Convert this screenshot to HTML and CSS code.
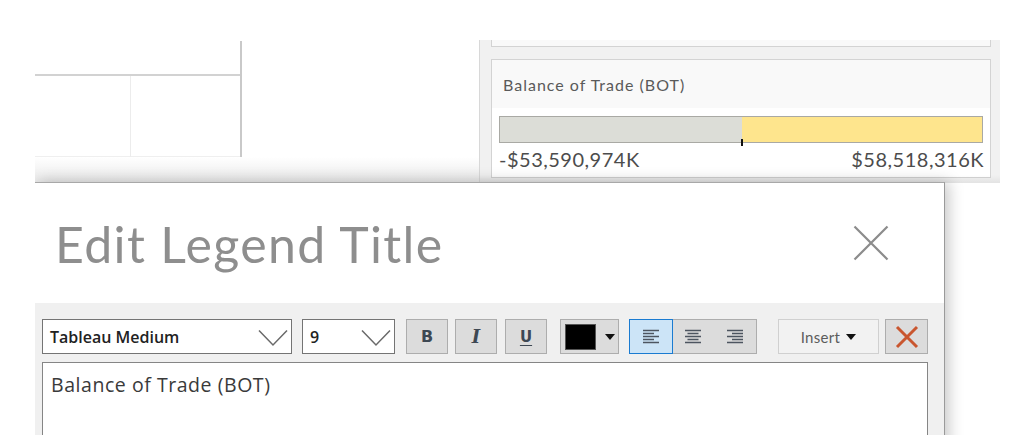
FILE: index.html
```html
<!DOCTYPE html>
<html lang="en">
<head>
<meta charset="utf-8">
<title>Edit Legend Title</title>
<link rel="stylesheet" href="styles.css">
</head>
<body>
<div class="app">
  <div class="sheet">
    <div class="table">
      <div class="table-head"></div>
      <div class="table-body">
        <div class="col col-a"><div class="cell"></div><div class="cell-foot"></div></div>
        <div class="col col-b"><div class="cell"></div><div class="cell-foot"></div></div>
      </div>
    </div>
  </div>
  <div class="panel">
    <div class="card card-top"></div>
    <div class="card legend">
      <div class="legend-title">Balance of Trade (BOT)</div>
      <div class="legend-body">
        <div class="ramp">
          <div class="ramp-neg"></div>
          <div class="ramp-pos"></div>
          <div class="ramp-tick"></div>
        </div>
        <div class="ramp-labels">
          <span>-$53,590,974K</span>
          <span>$58,518,316K</span>
        </div>
      </div>
    </div>
  </div>
</div>

<div class="dialog">
  <div class="dialog-head">
    <h1 class="dialog-title">Edit Legend Title</h1>
    <button class="close" aria-label="Close">
      <svg width="36" height="36" viewBox="0 0 36 36"><path d="M1.5 1.5 L34.5 34.5 M34.5 1.5 L1.5 34.5" stroke="#8c8c8c" stroke-width="2.2" fill="none"/></svg>
    </button>
  </div>
  <div class="dialog-body">
    <div class="toolbar">
      <div class="select select-font">
        <span>Tableau Medium</span>
        <svg class="chev" width="30" height="18" viewBox="0 0 30 18"><path d="M1 1.5 L15 16 L29 1.5" stroke="#6a6a6a" stroke-width="1.5" fill="none"/></svg>
      </div>
      <div class="select select-size">
        <span>9</span>
        <svg class="chev" width="30" height="18" viewBox="0 0 30 18"><path d="M1 1.5 L15 16 L29 1.5" stroke="#6a6a6a" stroke-width="1.5" fill="none"/></svg>
      </div>
      <button class="tb tb-b">B</button>
      <button class="tb tb-i">I</button>
      <button class="tb tb-u">U</button>
      <button class="tb tb-color"><span class="swatch"></span><span class="caret"></span></button>
      <div class="align-group">
        <button class="al al-on">
          <svg width="16" height="16" viewBox="0 0 16 16"><path d="M0 1.5H16M0 4.5H11M0 7.5H16M0 10.5H11M0 13.5H16" stroke="#4d5560" stroke-width="1.5"/></svg>
        </button>
        <button class="al">
          <svg width="16" height="16" viewBox="0 0 16 16"><path d="M0 1.5H16M2.5 4.5H13.5M0 7.5H16M2.5 10.5H13.5M0 13.5H16" stroke="#4d5560" stroke-width="1.5"/></svg>
        </button>
        <button class="al">
          <svg width="16" height="16" viewBox="0 0 16 16"><path d="M0 1.5H16M5 4.5H16M0 7.5H16M5 10.5H16M0 13.5H16" stroke="#4d5560" stroke-width="1.5"/></svg>
        </button>
      </div>
      <button class="insert">Insert <span class="caret"></span></button>
      <button class="tb tb-clear">
        <svg width="24" height="24" viewBox="0 0 24 24"><path d="M2 2 L22 22 M22 2 L2 22" stroke="#c9562f" stroke-width="3" fill="none"/></svg>
      </button>
    </div>
    <div class="editor">Balance of Trade (BOT)</div>
  </div>
</div>
</body>
</html>
```

FILE: styles.css
```css
* { box-sizing: border-box; }
html, body { margin: 0; padding: 0; }
body {
  width: 1010px;
  height: 435px;
  overflow: hidden;
  background: #ffffff;
  font-family: "Lato", "Open Sans", sans-serif;
  position: relative;
}

.app {
  display: flex;
  margin-left: 35px;
  padding-top: 40px;
  width: 965px;
  height: 435px;
}

/* left worksheet */
.sheet {
  width: 444px;
  height: 143px;
  position: relative;
}
.table {
  width: 207px;
  height: 143px;
  border-right: 2px solid #c9c9c9;
  margin-top: 1px;
  display: flex;
  flex-direction: column;
}
.table-head {
  height: 35px;
  border-bottom: 2px solid #d2d2d2;
}
.table-body {
  flex: 1;
  display: flex;
}
.col { display: flex; flex-direction: column; }
.col-a { width: 96px; border-right: 1px solid #ececec; }
.col-b { flex: 1; }
.cell { height: 81px; border-bottom: 1px solid #efefef; }
.cell-foot { flex: 1; }
.sheet::after {
  content: "";
  position: absolute;
  left: 0; right: 0; bottom: 0;
  height: 26px;
  background: linear-gradient(#ffffff, #e9e9e9);
  pointer-events: none;
}

/* right legend panel */
.panel {
  width: 521px;
  height: 143px;
  background: #f1f1f1;
  border-left: 1px solid #d8d8d8;
  padding: 0 9px 0 11px;
  position: relative;
}
.panel::after {
  content: "";
  position: absolute;
  left: 0; right: 0; bottom: 0;
  height: 8px;
  background: linear-gradient(rgba(0,0,0,0), rgba(0,0,0,0.06));
}
.card {
  border: 1px solid #d3d3d3;
  background: #f9f9f9;
}
.card-top {
  height: 7px;
  border-top: none;
  margin-bottom: 12px;
}
.legend {
  height: 119px;
  display: flex;
  flex-direction: column;
}
.legend-title {
  height: 48px;
  padding: 15px 0 0 11px;
  font-size: 16px;
  letter-spacing: 1px;
  color: #5a5a5a;
}
.legend-body {
  flex: 1;
  background: #ffffff;
  padding: 8px 7px 0 7px;
}
.ramp {
  height: 27px;
  display: flex;
  border: 1px solid #a9a9a4;
  position: relative;
}
.ramp-neg { width: 242px; background: #dcddd7; }
.ramp-pos { flex: 1; background: #fee58d; }
.ramp-tick {
  position: absolute;
  left: 241px;
  bottom: -4px;
  width: 2px;
  height: 7px;
  background: #111;
}
.ramp-labels {
  display: flex;
  justify-content: space-between;
  font-size: 20px;
  letter-spacing: 0.5px;
  color: #4c4c4c;
  line-height: 22px;
  margin-top: 5px;
  margin-right: -1px;
}

/* dialog */
.dialog {
  position: absolute;
  left: 35px;
  top: 182px;
  width: 910px;
  height: 280px;
  background: #f0f0f0;
  border-top: 1px solid #a8a8a8;
  border-right: 1px solid #9a9a9a;
  box-shadow: 4px 0 14px rgba(0,0,0,0.22);
  clip-path: inset(-30px -30px -30px 0);
}
.dialog-head {
  height: 120px;
  background: #ffffff;
  display: flex;
  align-items: flex-start;
  justify-content: space-between;
  padding: 0 55px 0 20px;
}
.dialog-title {
  margin: 0;
  padding-top: 28px;
  font-family: "Lato", sans-serif;
  font-weight: 400;
  font-size: 50px;
  letter-spacing: 1.35px;
  line-height: 66px;
  color: #8e8e8e;
}
.close {
  margin-top: 42px;
  padding: 0;
  border: none;
  background: none;
  width: 36px;
  height: 36px;
}
.close svg { display: block; }

.dialog-body {
  padding: 16px 16px 0 7px;
}
.toolbar {
  display: flex;
  align-items: center;
  height: 35px;
}
.select {
  height: 35px;
  background: #ffffff;
  border: 1px solid #747474;
  display: flex;
  align-items: center;
  justify-content: space-between;
  padding: 0 3px 0 7px;
  font-family: "Open Sans", sans-serif;
  font-weight: 600;
  font-size: 16px;
  color: #222;
}
.select .chev { margin-top: 2px; }
.select-font { width: 250px; margin-right: 10px; }
.select-size { width: 93px; margin-right: 11px; }

button { font: inherit; cursor: default; }
.tb {
  height: 35px;
  width: 42px;
  padding: 0;
  border: 1px solid #adadad;
  background: #dcdcdc;
  color: #3e4853;
  display: flex;
  align-items: center;
  justify-content: center;
}
.tb-b { font-family: "DejaVu Sans", sans-serif; font-weight: 700; font-size: 16px; margin-right: 7px; }
.tb-i { font-family: "DejaVu Serif", serif; font-style: italic; font-weight: 700; font-size: 18px; margin-right: 8px; }
.tb-u { font-family: "DejaVu Sans", sans-serif; font-weight: 700; font-size: 15px; text-decoration: underline; text-underline-offset: 3px; margin-right: 13px; }
.tb-color { width: 59px; justify-content: flex-start; padding-left: 4px; margin-right: 10px; }
.swatch {
  width: 31px;
  height: 26px;
  background: #000;
  border: 1px solid #555;
}
.caret {
  display: inline-block;
  width: 0; height: 0;
  border-left: 5px solid transparent;
  border-right: 5px solid transparent;
  border-top: 6px solid #111;
}
.tb-color .caret { margin-left: 9px; }

.align-group {
  display: flex;
  height: 35px;
  border: 1px solid #adadad;
  background: #dcdcdc;
  margin-right: 21px;
}
.al {
  width: 42px;
  padding: 0;
  border: none;
  background: transparent;
  display: flex;
  align-items: center;
  justify-content: center;
}
.al-on {
  background: #cce4f7;
  box-shadow: 0 0 0 1px #1a7bd1;
  position: relative;
  z-index: 1;
}
.insert {
  width: 101px;
  height: 35px;
  padding: 0;
  border: 1px solid #d0d0d0;
  background: #f2f2f2;
  font-family: "Lato", sans-serif;
  font-size: 15px;
  letter-spacing: 0.3px;
  color: #5c5c5c;
  margin-right: 6px;
  display: flex;
  align-items: center;
  justify-content: center;
  gap: 6px;
}
.tb-clear { width: 43px; }

.editor {
  margin-top: 8px;
  width: 886px;
  height: 100px;
  background: #ffffff;
  border: 1px solid #858585;
  padding: 8px 8px;
  font-family: "Open Sans", sans-serif;
  font-size: 19.5px;
  letter-spacing: 0.55px;
  color: #3a3a3a;
}
```
